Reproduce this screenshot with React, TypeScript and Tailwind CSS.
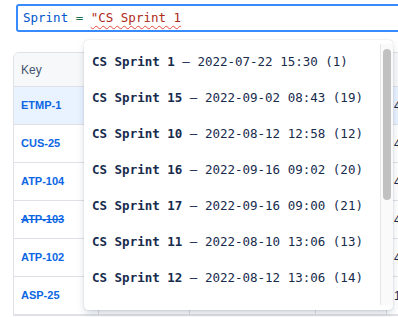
import React from 'react'

const mono = { fontFamily: '"DejaVu Sans Mono", "Liberation Mono", monospace' }
const sans = { fontFamily: '"Liberation Sans", Arial, sans-serif' }

const sprints = [
  ['CS Sprint 1', '2022-07-22 15:30 (1)'],
  ['CS Sprint 15', '2022-09-02 08:43 (19)'],
  ['CS Sprint 10', '2022-08-12 12:58 (12)'],
  ['CS Sprint 16', '2022-09-16 09:02 (20)'],
  ['CS Sprint 17', '2022-09-16 09:00 (21)'],
  ['CS Sprint 11', '2022-08-10 13:06 (13)'],
  ['CS Sprint 12', '2022-08-12 13:06 (14)'],
]

const rows = [
  { key: 'ETMP-1', num: '42', selected: true },
  { key: 'CUS-25', num: '41' },
  { key: 'ATP-104', num: '44' },
  { key: 'ATP-103', num: '43', done: true },
  { key: 'ATP-102', num: '45' },
  { key: 'ASP-25', num: '12' },
]

const cols = 'grid grid-cols-[85px_91px_126px_71px_100px]'

export default function App() {
  return (
    <div className="relative w-[398px] h-[317px] overflow-hidden bg-white" style={sans}>
      {/* query input */}
      <div className="ml-[16px] mt-[4px] h-[28px] w-[420px] border-2 border-[#388bff] rounded-[3px] flex items-center pl-[5px] text-[12.5px]" style={mono}>
        <span className="text-[#0055cc]">Sprint</span>
        <span className="text-[#216e4e]">&nbsp;=&nbsp;</span>
        <span className="text-[#ae2a19] underline decoration-wavy decoration-[#e2483d] decoration-1 underline-offset-[3px]">"CS Sprint 1</span>
      </div>

      {/* issues table */}
      <div className="ml-[13px] mt-[20px] w-[480px] border border-[#dfe1e6] rounded-tl-[6px]">
        <div className={`${cols} h-[34px] bg-[#f7f8f9] border-b border-[#dfe1e6] rounded-tl-[6px]`}>
          <div className="flex items-center px-[7px] text-[12px] text-[#44546f]">Key</div>
          <div />
          <div />
          <div />
          <div />
        </div>
        {rows.map((r) => (
          <div key={r.key} className={`${cols} h-[38px] border-b border-[#dfe1e6] ${r.selected ? 'bg-[#e9f2ff]' : 'bg-white'}`}>
            <div className={`flex items-center px-[7px] text-[11px] font-bold text-[#0c66e4] border-r border-[#dfe1e6] ${r.done ? 'line-through' : ''}`}>
              {r.key}
            </div>
            <div className="border-r border-[#dfe1e6]" />
            <div className="border-r border-[#dfe1e6]" />
            <div className="border-r border-[#dfe1e6]" />
            <div className="flex items-center px-[7px] text-[12px] text-[#172b4d]">{r.num}</div>
          </div>
        ))}
      </div>

      {/* autocomplete dropdown */}
      <div className="absolute left-[84px] top-[40px] w-[309px] h-[270px] bg-white rounded-[4px] overflow-hidden shadow-[0_4px_8px_-2px_rgba(9,30,66,0.25),0_0_1px_rgba(9,30,66,0.31)]">
        <div className="pt-[4px] pl-[8px] pr-[14px] text-[12.5px] text-[#172b4d]" style={mono}>
          {sprints.map(([name, rest]) => (
            <div key={name} className="h-[36px] flex items-center whitespace-pre">
              <span className="font-bold">{name}</span>
              <span> – {rest}</span>
            </div>
          ))}
        </div>
        <div className="absolute right-0 top-[4px] bottom-[5px] w-[13px] bg-[#fafafa] border-l border-[#e6e6e6]">
          <div className="ml-[2px] mt-[5px] w-[8px] h-[151px] rounded-full bg-[#c1c1c1]" />
        </div>
      </div>
    </div>
  )
}
